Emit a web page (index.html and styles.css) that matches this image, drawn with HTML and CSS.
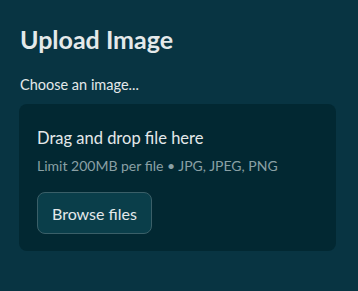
FILE: index.html
```html
<!DOCTYPE html>
<html lang="en">
<head>
    <meta charset="UTF-8">
    <meta name="viewport" content="width=device-width, initial-scale=1.0">
    <title>Upload Image</title>
    <link rel="stylesheet" href="styles.css">
</head>
<body>
    <div class="container">
        <h3 class="title">Upload Image</h3>
        <label class="label" for="fileInput">Choose an image...</label>
        <section class="dropzone">
            <div class="drop-text">
                <span class="drop-main">Drag and drop file here</span>
                <small class="drop-hint">Limit 200MB per file &bull; JPG, JPEG, PNG</small>
            </div>
            <button class="browse" type="button">Browse files</button>
            <input id="fileInput" type="file" accept=".jpg,.jpeg,.png" hidden>
        </section>
    </div>
</body>
</html>
```

FILE: styles.css
```css
body {
    margin: 0;
    background-color: #083442;
    font-family: Lato, "Noto Sans", sans-serif;
    color: #e4e9ea;
}
.container {
    padding: 22px 22px 0 19px;
}
.title {
    margin: 0 0 0 1px;
    font-size: 25px;
    font-weight: 700;
    line-height: 34px;
}
.label {
    display: block;
    margin: 19px 0 9px 1px;
    font-size: 14.5px;
    line-height: 20px;
}
.dropzone {
    display: flex;
    flex-direction: column;
    align-items: flex-start;
    gap: 17px;
    padding: 23px 18px 17px;
    background-color: #022832;
    border-radius: 8px;
}
.drop-text {
    display: flex;
    flex-direction: column;
    gap: 8px;
}
.drop-main {
    font-size: 16.5px;
    line-height: 22px;
}
.drop-hint {
    font-size: 14px;
    line-height: 18px;
    color: #8aa0a5;
}
.browse {
    padding: 0 14px;
    height: 42px;
    font-family: inherit;
    font-size: 16px;
    color: #e4e9ea;
    background-color: #0a3e4a;
    border: 1px solid #3a5f68;
    border-radius: 8px;
    cursor: pointer;
}
```
